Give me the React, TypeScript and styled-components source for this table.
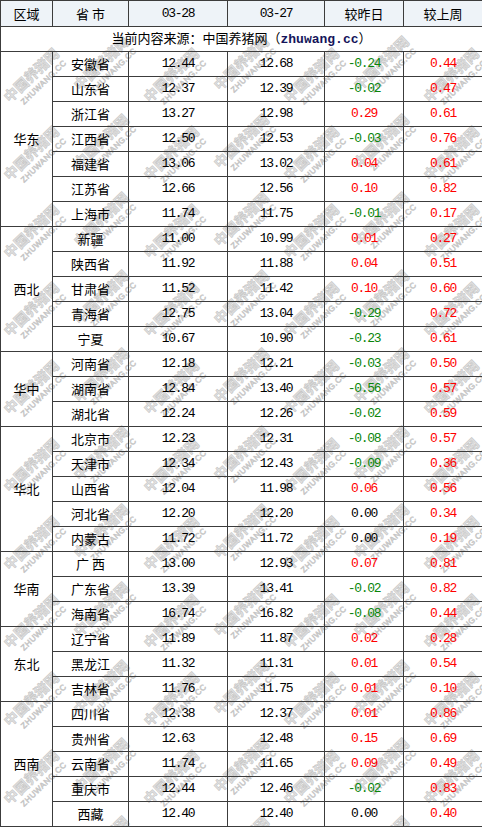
import React from "react";
import styled, { createGlobalStyle } from "styled-components";

const Global = createGlobalStyle`
  html, body { margin: 0; padding: 0; background: #fff; }
  body { font-family: "Noto Sans CJK SC", "Liberation Sans", sans-serif; }
`;

type Row = [string, string, string, string, string];
type Group = { area: string; rows: Row[] };

const groups: Group[] = [
  {
    area: "华东",
    rows: [
      ["安徽省", "12.44", "12.68", "-0.24", "0.44"],
      ["山东省", "12.37", "12.39", "-0.02", "0.47"],
      ["浙江省", "13.27", "12.98", "0.29", "0.61"],
      ["江西省", "12.50", "12.53", "-0.03", "0.76"],
      ["福建省", "13.06", "13.02", "0.04", "0.61"],
      ["江苏省", "12.66", "12.56", "0.10", "0.82"],
      ["上海市", "11.74", "11.75", "-0.01", "0.17"],
    ],
  },
  {
    area: "西北",
    rows: [
      ["新疆", "11.00", "10.99", "0.01", "0.27"],
      ["陕西省", "11.92", "11.88", "0.04", "0.51"],
      ["甘肃省", "11.52", "11.42", "0.10", "0.60"],
      ["青海省", "12.75", "13.04", "-0.29", "0.72"],
      ["宁夏", "10.67", "10.90", "-0.23", "0.61"],
    ],
  },
  {
    area: "华中",
    rows: [
      ["河南省", "12.18", "12.21", "-0.03", "0.50"],
      ["湖南省", "12.84", "13.40", "-0.56", "0.57"],
      ["湖北省", "12.24", "12.26", "-0.02", "0.59"],
    ],
  },
  {
    area: "华北",
    rows: [
      ["北京市", "12.23", "12.31", "-0.08", "0.57"],
      ["天津市", "12.34", "12.43", "-0.09", "0.36"],
      ["山西省", "12.04", "11.98", "0.06", "0.56"],
      ["河北省", "12.20", "12.20", "0.00", "0.34"],
      ["内蒙古", "11.72", "11.72", "0.00", "0.19"],
    ],
  },
  {
    area: "华南",
    rows: [
      ["广 西", "13.00", "12.93", "0.07", "0.81"],
      ["广东省", "13.39", "13.41", "-0.02", "0.82"],
      ["海南省", "16.74", "16.82", "-0.08", "0.44"],
    ],
  },
  {
    area: "东北",
    rows: [
      ["辽宁省", "11.89", "11.87", "0.02", "0.28"],
      ["黑龙江", "11.32", "11.31", "0.01", "0.54"],
      ["吉林省", "11.76", "11.75", "0.01", "0.10"],
    ],
  },
  {
    area: "西南",
    rows: [
      ["四川省", "12.38", "12.37", "0.01", "0.86"],
      ["贵州省", "12.63", "12.48", "0.15", "0.69"],
      ["云南省", "11.74", "11.65", "0.09", "0.49"],
      ["重庆市", "12.44", "12.46", "-0.02", "0.83"],
      ["西藏", "12.40", "12.40", "0.00", "0.40"],
    ],
  },
];

const Wrap = styled.div`
  position: relative;
  width: 482px;
  overflow: hidden;
`;

const Table = styled.table`
  position: relative;
  z-index: 1;
  border-collapse: collapse;
  table-layout: fixed;
  width: 482px;
  color: #000;
`;

const HeadRow = styled.tr`
  height: 26px;
  background: #eef3f8;
`;

const BodyRow = styled.tr`
  height: 25px;
`;

const Cell = styled.td<{ $mono?: boolean }>`
  border: 1px solid #3c3c3c;
  padding: 0;
  text-align: center;
  vertical-align: middle;
  font-size: 13px;
  line-height: 16px;
  white-space: nowrap;
  font-family: ${(p) =>
    p.$mono
      ? `"Liberation Mono", "DejaVu Sans Mono", monospace`
      : `"Noto Sans CJK SC", "Liberation Sans", sans-serif`};
  letter-spacing: ${(p) => (p.$mono ? "-1.3px" : "0")};
`;

const HeadCell = styled(Cell).attrs({ as: "th" })`
  font-weight: normal;
`;

const Change = styled(Cell)<{ $tone: "up" | "down" | "flat" }>`
  color: ${(p) => (p.$tone === "up" ? "#ff0000" : p.$tone === "down" ? "#0a850a" : "#000")};
`;

const Site = styled.b`
  font-family: "Liberation Mono", "Courier New", monospace;
  font-weight: bold;
  color: #14145a;
  letter-spacing: 0;
`;

const Watermark = styled.svg`
  position: absolute;
  z-index: 0;
  left: 0;
  top: 27px;
  width: 482px;
  height: 800px;
  pointer-events: none;
`;

const tone = (v: string): "up" | "down" | "flat" =>
  v.startsWith("-") ? "down" : v === "0.00" ? "flat" : "up";

const cols = [0, 1, 2, 3, 4, 5, 6];
const rows = [0, 1, 2, 3, 4, 5, 6, 7, 8, 9, 10];

export default function App() {
  return (
    <>
      <Global />
      <Wrap>
        <Watermark viewBox="0 0 482 800" aria-hidden="true">
          {rows.map((ry) =>
            cols.map((cx) => (
              <g
                key={`${cx}-${ry}`}
                transform={`translate(${35 + cx * 70} ${52 + ry * 78 - (cx % 2) * 12}) rotate(-44)`}
                fill="#e3e3e3"
                stroke="#c6c6c6"
                strokeWidth="0.6"
                textAnchor="middle"
              >
                <text x="0" y="0" fontSize="14" fontWeight="bold" letterSpacing="0"
                  fontFamily="'Noto Sans CJK SC', sans-serif">中国养猪网</text>
                <text x="4" y="11" fontSize="8" letterSpacing="0.5"
                  fontFamily="'Liberation Sans', sans-serif">ZHUWANG.CC</text>
              </g>
            ))
          )}
        </Watermark>
        <Table>
          <colgroup>
            <col style={{ width: 52 }} />
            <col style={{ width: 76 }} />
            <col style={{ width: 99 }} />
            <col style={{ width: 97 }} />
            <col style={{ width: 79 }} />
            <col style={{ width: 79 }} />
          </colgroup>
          <thead>
            <HeadRow>
              <HeadCell>区域</HeadCell>
              <HeadCell>省 市</HeadCell>
              <HeadCell $mono>03-28</HeadCell>
              <HeadCell $mono>03-27</HeadCell>
              <HeadCell>较昨日</HeadCell>
              <HeadCell>较上周</HeadCell>
            </HeadRow>
          </thead>
          <tbody>
            <BodyRow>
              <Cell colSpan={6}>
                当前内容来源：中国养猪网（<Site>zhuwang.cc</Site>）
              </Cell>
            </BodyRow>
            {groups.map((g) =>
              g.rows.map((r, i) => (
                <BodyRow key={g.area + r[0]}>
                  {i === 0 && <Cell rowSpan={g.rows.length}>{g.area}</Cell>}
                  <Cell>{r[0]}</Cell>
                  <Cell $mono>{r[1]}</Cell>
                  <Cell $mono>{r[2]}</Cell>
                  <Change $mono $tone={tone(r[3])}>{r[3]}</Change>
                  <Change $mono $tone={tone(r[4])}>{r[4]}</Change>
                </BodyRow>
              ))
            )}
          </tbody>
        </Table>
      </Wrap>
    </>
  );
}
